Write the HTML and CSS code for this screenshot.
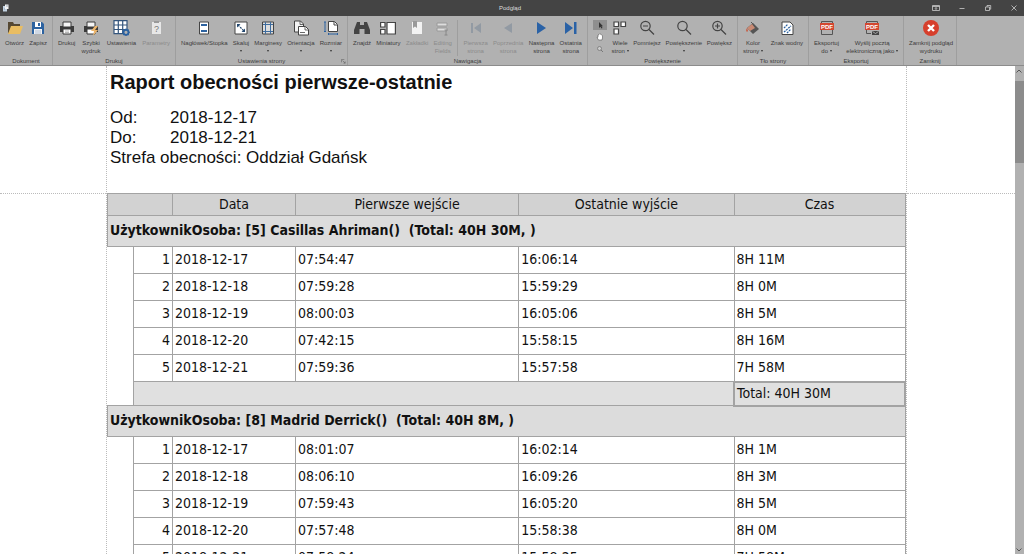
FILE: index.html
```
<!DOCTYPE html>
<html lang="pl">
<head>
    <meta charset="UTF-8">
    <meta name="viewport" content="width=device-width, initial-scale=1.0">
    <title>Podgląd</title>
    <link rel="stylesheet" href="styles.css">
</head>
<body>
    <header class="titlebar">
        <svg class="app-icon" viewBox="0 0 8 8"><path d="M1 2h4v5.500H1z" fill="#c3d3e2"/><path d="M3 .5h3.500v4.500H3z" fill="#f3f3f3"/><path d="M4 2h2M2 5h1" stroke="#6b7f96" stroke-width=".6"/></svg>
        <h1 class="window-title">Podgląd</h1>
        <div class="window-buttons">
            <button type="button" aria-label="Wstążka"><svg viewBox="0 0 8 8"><path d="M.5 1.5h7v5h-7zM.5 2.5h7M4 6V3.7M3 4.6l1-1 1 1"/></svg></button>
            <button type="button" aria-label="Minimalizuj"><svg viewBox="0 0 8 8"><path d="M1.5 4.5h5"/></svg></button>
            <button type="button" aria-label="Przywróć"><svg viewBox="0 0 8 8"><path d="M1.5 3h4v3.5h-4zM3 3V1.5h3.7v3.7H5.5"/></svg></button>
            <button type="button" aria-label="Zamknij"><svg viewBox="0 0 8 8"><path d="M1.5 1.5l5 5M6.5 1.5l-5 5"/></svg></button>
        </div>
    </header>

    <nav class="ribbon">
        <section class="group">
            <div class="tools">
                <button type="button" class="tool"><svg viewBox="0 0 16 16"><path d="M1 2h5l1 2h6v4H4l-3 6z" fill="#554832"/><path d="M4 6h12l-3 8H1z" fill="#e9bd62"/></svg>Otwórz</button>
                <button type="button" class="tool"><svg viewBox="0 0 16 16"><path d="M2 2h10l2 2v10H2z" fill="#2c62a0"/><path d="M5 2h6v5H5z" fill="#fff"/><path d="M8 3h2v3H8z" fill="#2c62a0"/><path d="M4 9h8v5H4z" fill="#f5f5f5"/><path d="M5 11h6M5 13h6" stroke="#8ba5c5" stroke-width=".7"/></svg>Zapisz</button>
            </div>
            <h2>Dokument</h2>
        </section>
        <section class="group">
            <div class="tools">
                <button type="button" class="tool"><svg viewBox="0 0 16 16"><path d="M1 6h14v6H1z" fill="#3b3b3b"/><path d="M4 2h8v5H4z" fill="#f5f5f5" stroke="#3b3b3b"/><path d="M4 9h8v5H4z" fill="#fff" stroke="#3b3b3b"/><path d="M6 11h4M6 12.5h4" stroke="#888" stroke-width=".6"/></svg>Drukuj</button>
                <button type="button" class="tool"><svg viewBox="0 0 16 16"><path d="M1 6h14v6H1z" fill="#3b3b3b"/><path d="M4 2h8v5H4z" fill="#f5f5f5" stroke="#3b3b3b"/><path d="M4 9h8v5H4z" fill="#fff" stroke="#3b3b3b"/><path d="M12 6l-4 5h3l-1 5 5-6h-3l3-4z" fill="#edb66c"/></svg>Szybki<br>wydruk</button>
                <button type="button" class="tool"><svg class="wide-icon" viewBox="0 0 18 16"><path d="M2 .7h13v13H2zM2 5h13M2 9.5h13M6.3 1v13M10.7 1v13" fill="#fff" stroke="#34557c" stroke-width="1.2"/><circle cx="14" cy="12.3" r="2.5" fill="#b1b1b1" stroke="#2c62a0" stroke-width="1.8"/><path d="M14 8.5v1.3M14 14.8v1.2M10.2 12.3h1.3M16.5 12.3H18M11.3 9.6l1 1M16.7 9.6l-1 1M11.3 15l1-1M16.7 15l-1-1" stroke="#2c62a0" stroke-width="1.1"/></svg>Ustawienia</button>
                <button type="button" class="tool" disabled><svg viewBox="0 0 16 16"><path d="M4 2h9v12H4z" fill="#e7e7e7"/><path d="M6 1h5v2H6z" fill="#999"/><text x="8.5" y="12" class="question">?</text></svg>Parametry</button>
            </div>
            <h2>Drukuj</h2>
        </section>
        <section class="group">
            <div class="tools">
                <button type="button" class="tool"><svg viewBox="0 0 16 16"><path d="M3.5 2h9v12h-9z" fill="#fff" stroke="#444"/><path d="M5 5h6M5 11h6" stroke="#2c62a0" stroke-width="2"/></svg>Nagłówek/Stopka</button>
                <button type="button" class="tool menu"><svg viewBox="0 0 16 16"><path d="M2 2h12v12H2z" fill="#fff" stroke="#444"/><path d="M5 5l6 6" stroke="#24486f" stroke-width="1.2" stroke-dasharray="2 1"/><path d="M4 4h3.5L4 7.5zM12 12H8.5L12 8.5z" fill="#24486f"/></svg>Skaluj</button>
                <button type="button" class="tool menu"><svg viewBox="0 0 16 16"><path d="M2.5 2h11v12h-11z" fill="#ddd" stroke="#444"/><path d="M5.5 2v12M10.5 2v12M3 4.5h10M3 11.5h10" stroke="#3e6c9e"/></svg>Marginesy</button>
                <button type="button" class="tool menu"><svg viewBox="0 0 16 16"><path d="M1.5 1h6l3 3v8h-9z" fill="#f3f3f3" stroke="#444"/><path d="M5.5 6.5h7l3 3V15h-10z" fill="#fff" stroke="#444"/><path d="M7 1v3.500h3.500M12 7v3h3.500M7 12.500h5" fill="none" stroke="#444" stroke-width=".8"/></svg>Orientacja</button>
                <button type="button" class="tool menu"><svg viewBox="0 0 16 16"><path d="M5.5 1.5h6l3 3v7h-9z" fill="#fff" stroke="#444"/><path d="M11 2v3h3" fill="none" stroke="#444"/><path d="M2 2v9.500M1 2h2M1 11.500h2M5.500 14h9M5.500 13v2M14.500 13v2" stroke="#2c62a0"/></svg>Rozmiar</button>
            </div>
            <h2>Ustawienia strony</h2>
            <svg class="launcher" viewBox="0 0 6 6"><path d="M.5 4V.5H4M2 2l3 3M5 3v2H3"/></svg>
        </section>
        <section class="group">
            <div class="tools">
                <button type="button" class="tool"><svg viewBox="0 0 16 16"><path d="M3 2h3v3h4V2h3l3 8v4h-5.500V9h-5v5H0v-4z" fill="#444"/></svg>Znajdź</button>
                <button type="button" class="tool"><svg viewBox="0 0 16 16"><path d="M.6 2.500h4.400v4.500H.6zM.6 9.500h4.400V14H.6zM7 2.500h8.400V14H7z" fill="#fff" stroke="#444" stroke-width="1.2"/></svg>Miniatury</button>
                <button type="button" class="tool" disabled><svg viewBox="0 0 16 16"><path d="M3 2h10v12H3z" fill="#f2f2f2"/><path d="M4 1h4v7L6 6.500 4 8z" fill="#999"/></svg>Zakładki</button>
                <button type="button" class="tool" disabled><svg viewBox="0 0 16 16"><path d="M2 3h10v3H2zM2 8h10v3H2z" fill="#ddd" stroke="#999"/><path d="M11 10v5M9.500 15h3M9.500 10h3" stroke="#888"/></svg>Editing<br>Fields</button>
                <span class="divider"></span>
                <button type="button" class="tool" disabled><svg viewBox="0 0 16 16"><path d="M3 3h2v10H3zM13 3v10L6 8z" fill="#929aa3"/></svg>Pierwsza<br>strona</button>
                <button type="button" class="tool" disabled><svg viewBox="0 0 16 16"><path d="M12 3v10L4 8z" fill="#929aa3"/></svg>Poprzednia<br>strona</button>
                <button type="button" class="tool"><svg viewBox="0 0 16 16"><path d="M4 2v12l9-6z" fill="#2a62a6"/></svg>Następna<br>strona</button>
                <button type="button" class="tool"><svg viewBox="0 0 16 16"><path d="M2 2v12l8-6zM11 2h2.500v12H11z" fill="#2a62a6"/></svg>Ostatnia<br>strona</button>
            </div>
            <h2>Nawigacja</h2>
        </section>
        <section class="group">
            <div class="tools">
                <div class="pointer-tools">
                    <button type="button" class="active" aria-label="Wskaźnik"><svg viewBox="0 0 8 8"><path d="M3 1v6l1.400-1.300L5.500 7.500l1-.5-1-1.700H7z" fill="#333"/></svg></button>
                    <button type="button" aria-label="Rączka"><svg viewBox="0 0 8 8"><path d="M2.500 7L1 4.500l1-.3V2l1-.5.7-.7 1 .5 1 .5.8 1V5L6 7z" fill="#fff" stroke="#555" stroke-width=".6"/></svg></button>
                    <button type="button" aria-label="Lupa"><svg viewBox="0 0 8 8"><path d="M5 5l2 2" stroke="#777"/><circle cx="3.500" cy="3.500" r="2" fill="#ccc" stroke="#777" stroke-width=".8"/></svg></button>
                </div>
                <button type="button" class="tool"><svg viewBox="0 0 16 16"><path d="M2 2h4.500v4.500H2zM9 2h4.500v4.500H9zM2 9h4.500v5H2z" fill="#fff" stroke="#444" stroke-width="1.2"/></svg>Wiele<span>stron <i class="caret"></i></span></button>
                <button type="button" class="tool"><svg class="lens" viewBox="0 0 16 16"><circle cx="6.500" cy="6" r="4.700"/><path d="M10 9.500l5 5M4 6h5"/></svg>Pomniejsz</button>
                <button type="button" class="tool menu"><svg class="lens" viewBox="0 0 16 16"><circle cx="6.500" cy="6" r="4.700"/><path d="M10 9.500l5 5"/></svg>Powiększenie</button>
                <button type="button" class="tool"><svg class="lens" viewBox="0 0 16 16"><circle cx="6.500" cy="6" r="4.700"/><path d="M10 9.500l5 5M4 6h5M6.500 3.500v5"/></svg>Powiększ</button>
            </div>
            <h2>Powiększenie</h2>
        </section>
        <section class="group">
            <div class="tools">
                <button type="button" class="tool"><svg viewBox="0 0 16 16"><path d="M8 3l6 6-6 5-6-6z" fill="#555"/><path d="M2 8l5-4 3 4-5 3z" fill="#c98a74"/><path d="M6 2l5 5" stroke="#555"/><path d="M2 8c-2 3 0 5 1 3z" fill="#c75b40"/></svg>Kolor<span>strony <i class="caret"></i></span></button>
                <button type="button" class="tool"><svg viewBox="0 0 16 16"><path d="M3 2h8l3 3v9.500H3z" fill="#fff" stroke="#444"/><path d="M5 8l4-4M5 12l7-6M8 13l4-4" stroke="#2c62a0" stroke-width="1.3" stroke-dasharray="2 .8"/></svg>Znak wodny</button>
            </div>
            <h2>Tło strony</h2>
        </section>
        <section class="group">
            <div class="tools">
                <button type="button" class="tool"><svg viewBox="0 0 16 16"><path d="M2.500 7V1.500h11V7M2.500 8v6.500h11V8" fill="none" stroke="#555"/><path d="M1 3h14v7H1z" fill="#d34731"/><text x="8" y="9" class="pdf">PDF</text></svg>Eksportuj<span>do <i class="caret"></i></span></button>
                <button type="button" class="tool"><svg viewBox="0 0 16 16"><path d="M2.500 7V1.500h11V7M2.500 8v5.500H7" fill="none" stroke="#555"/><path d="M1 3h14v7H1z" fill="#d34731"/><text x="8" y="9" class="pdf">PDF</text><path d="M8 11h7v4H8z" fill="#444"/><path d="M8.500 11.500l3 2 3-2" fill="none" stroke="#ccc" stroke-width=".7"/></svg>Wyślij pocztą<span>elektroniczną jako <i class="caret"></i></span></button>
            </div>
            <h2>Eksportuj</h2>
        </section>
        <section class="group">
            <div class="tools">
                <button type="button" class="tool"><svg viewBox="0 0 16 16"><circle cx="8" cy="8" r="8" fill="#d63f2c"/><path d="M5 5l6 6M11 5l-6 6" stroke="#fff" stroke-width="2.4"/></svg>Zamknij podgląd<br>wydruku</button>
            </div>
            <h2>Zamknij</h2>
        </section>
    </nav>

    <main class="viewer">
        <div class="margin"></div>
        <article class="page">
            <div class="report-header">
                <h2>Raport obecności pierwsze-ostatnie</h2>
                <dl>
                    <dt>Od:</dt><dd>2018-12-17</dd>
                    <dt>Do:</dt><dd>2018-12-21</dd>
                </dl>
                <p>Strefa obecności: Oddział Gdańsk</p>
            </div>
            <table class="report">
                <colgroup>
                    <col class="col-indent"><col class="col-index"><col class="col-date"><col class="col-in"><col class="col-out"><col>
                </colgroup>
                <thead>
                    <tr><th colspan="2"></th><th>Data</th><th>Pierwsze wejście</th><th>Ostatnie wyjście</th><th>Czas</th></tr>
                </thead>
                <tbody>
                    <tr class="person"><th colspan="6">UżytkownikOsoba: [5] Casillas Ahriman()&nbsp; (Total: 40H 30M, )</th></tr>
                    <tr><td></td><td>1</td><td>2018-12-17</td><td>07:54:47</td><td>16:06:14</td><td>8H 11M</td></tr>
                    <tr><td></td><td>2</td><td>2018-12-18</td><td>07:59:28</td><td>15:59:29</td><td>8H 0M</td></tr>
                    <tr><td></td><td>3</td><td>2018-12-19</td><td>08:00:03</td><td>16:05:06</td><td>8H 5M</td></tr>
                    <tr><td></td><td>4</td><td>2018-12-20</td><td>07:42:15</td><td>15:58:15</td><td>8H 16M</td></tr>
                    <tr><td></td><td>5</td><td>2018-12-21</td><td>07:59:36</td><td>15:57:58</td><td>7H 58M</td></tr>
                    <tr class="total"><td></td><td colspan="4"></td><td>Total: 40H 30M</td></tr>
                </tbody>
                <tbody>
                    <tr class="person"><th colspan="6">UżytkownikOsoba: [8] Madrid Derrick()&nbsp; (Total: 40H 8M, )</th></tr>
                    <tr><td></td><td>1</td><td>2018-12-17</td><td>08:01:07</td><td>16:02:14</td><td>8H 1M</td></tr>
                    <tr><td></td><td>2</td><td>2018-12-18</td><td>08:06:10</td><td>16:09:26</td><td>8H 3M</td></tr>
                    <tr><td></td><td>3</td><td>2018-12-19</td><td>07:59:43</td><td>16:05:20</td><td>8H 5M</td></tr>
                    <tr><td></td><td>4</td><td>2018-12-20</td><td>07:57:48</td><td>15:58:38</td><td>8H 0M</td></tr>
                    <tr><td></td><td>5</td><td>2018-12-21</td><td>07:58:24</td><td>15:58:25</td><td>7H 58M</td></tr>
                </tbody>
            </table>
        </article>
        <div class="margin"></div>
        <div class="scrollbar">
            <svg viewBox="0 0 8 8"><path d="M1.5 5.5L4 3l2.5 2.5"/></svg>
            <div class="thumb"></div>
            <svg viewBox="0 0 8 8"><path d="M1.5 2.5L4 5l2.5-2.500"/></svg>
        </div>
    </main>
</body>
</html>
```
FILE: styles.css
```
* {
    box-sizing: border-box;
}

body {
    margin: 0;
    height: 100vh;
    display: flex;
    flex-direction: column;
    overflow: hidden;
    background: #fff;
    color: #111;
    font-family: "DejaVu Sans Condensed", "DejaVu Sans", sans-serif;
}

h1, h2, p, dl, dd {
    margin: 0;
}

button {
    padding: 0;
    border: none;
    background: none;
    color: inherit;
    font: inherit;
}

/* title bar */
.titlebar {
    flex: none;
    display: grid;
    grid-template-columns: 1fr auto 1fr;
    align-items: center;
    height: 16px;
    padding: 0 6px 0 2px;
    background: #444;
    color: #ddd;
}

.app-icon {
    width: 8px;
    height: 8px;
}

.window-title {
    font: 6px "Liberation Sans", Arial, sans-serif;
}

.window-buttons {
    display: flex;
    justify-content: flex-end;
    gap: 18px;
}

.window-buttons button {
    display: flex;
}

.window-buttons svg {
    width: 8px;
    height: 8px;
    fill: none;
    stroke: #ccc;
    stroke-width: 0.8;
}

/* ribbon */
.ribbon {
    flex: none;
    display: grid;
    grid-template-columns: 53px 123px 172px 240px 150px 71px 95px 53px;
    height: 50px;
    border-bottom: 1px solid #8c8c8c;
    background: #b1b1b1;
    color: #3c3c3c;
    font: 6px/8px "Liberation Sans", Arial, sans-serif;
}

.group {
    position: relative;
    display: flex;
    flex-direction: column;
    justify-content: space-between;
    border-right: 1px solid #9e9e9e;
}

.group h2 {
    font: inherit;
    text-align: center;
}

.tools {
    display: flex;
    justify-content: space-between;
    padding: 4px 5px 0;
}

.tool {
    display: flex;
    flex-direction: column;
    align-items: center;
    height: 36px;
    text-align: center;
    white-space: nowrap;
}

.tool svg {
    width: 16px;
    height: 16px;
    margin-bottom: 3px;
    fill: none;
}

.tool .wide-icon {
    width: 18px;
}

.lens {
    stroke: #444;
    stroke-width: 1.2;
}

.pdf {
    fill: #fff;
    font-size: 6px;
    font-weight: bold;
    text-anchor: middle;
}

.question {
    fill: #777;
    font-size: 9px;
    text-anchor: middle;
}

.tool:disabled {
    color: #8b8b8b;
}

.caret, .menu::after {
    content: "";
    display: inline-block;
    border: 1px solid transparent;
    border-top: 2px solid #333;
    border-bottom: 0;
}

.menu::after {
    margin-top: 3px;
}

.caret {
    margin-bottom: 1px;
}

.divider {
    width: 1px;
    background: #9e9e9e;
}

.pointer-tools {
    display: flex;
    flex-direction: column;
    gap: 2px;
}

.pointer-tools button {
    display: flex;
    justify-content: center;
    width: 14px;
    padding: 1px 0;
}

.pointer-tools svg {
    width: 8px;
    height: 8px;
}

.pointer-tools .active {
    background: #8f8f8f;
}

.launcher {
    position: absolute;
    right: 1px;
    bottom: 1px;
    width: 5px;
    height: 5px;
    fill: none;
    stroke: #666;
    stroke-width: 0.8;
}

/* preview area */
.viewer {
    flex: 1;
    min-height: 0;
    display: grid;
    grid-template-rows: 100%;
    grid-template-columns: 106px 1fr 108px 9px;
    overflow: hidden;
}

.margin {
    height: 128px;
    border-bottom: 1px dotted #bbb;
}

.page {
    min-width: 0;
    border-right: 1px dotted #bbb;
    border-left: 1px dotted #bbb;
}

.report-header {
    height: 127px;
    padding: 5px 3px 0;
    font: 17px/20px "Liberation Sans", Arial, sans-serif;
}

.report-header h2 {
    margin-bottom: 14px;
    font-size: 20px;
    line-height: 23px;
}

.report-header dl {
    display: grid;
    grid-template-columns: 60px 1fr;
}

/* report table */
.report {
    width: 100%;
    border-collapse: collapse;
    table-layout: fixed;
    font-size: 14px;
    line-height: 16px;
}

.col-indent {
    width: 26px;
}

.col-index {
    width: 39px;
}

.col-date {
    width: 123px;
}

.col-in {
    width: 28%;
}

.col-out {
    width: 27%;
}

.report th, .report td {
    height: 27px;
    padding: 0 2px 2px;
    border: 1px solid #a3a3a3;
    text-align: left;
}

.report thead th {
    height: 22px;
    background: #d2d2d2;
    font-weight: normal;
    text-align: center;
}

.report .person th {
    height: 31px;
    background: #dcdcdc;
}

.report td:first-child {
    border: none;
}

.report td:nth-child(2) {
    text-align: right;
}

.report .total td {
    height: 24px;
}

.report .total td:nth-child(n+2) {
    background: #e0e0e0;
}

.report .total td:last-child {
    border: 2px solid #a3a3a3;
}

/* scrollbar */
.scrollbar {
    display: flex;
    flex-direction: column;
    background: #b1b1b1;
}

.scrollbar svg {
    width: 8px;
    height: 8px;
    margin: 1px 0 6px;
    fill: none;
    stroke: #555;
}

.scrollbar svg:last-child {
    margin: auto 0 0;
}

.thumb {
    height: 82px;
    background: #8c8c8c;
}
```
